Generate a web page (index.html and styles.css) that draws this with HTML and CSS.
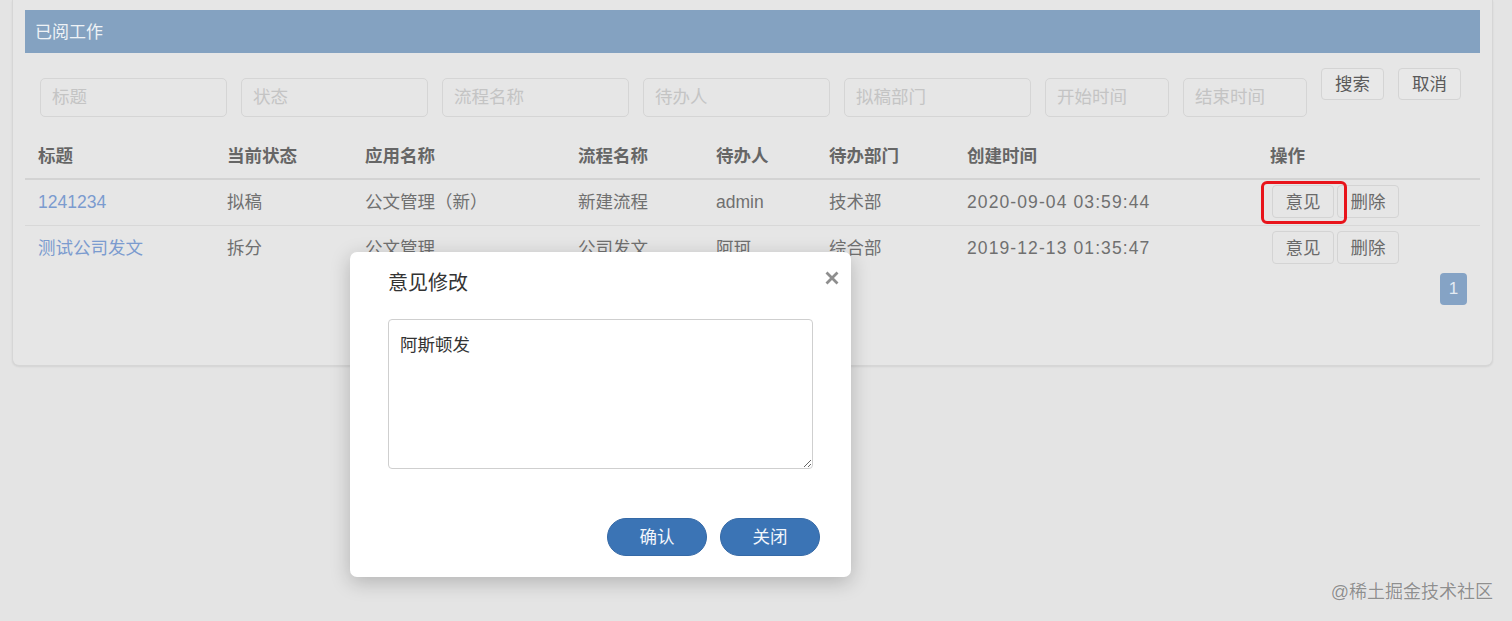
FILE: index.html
```html
<!DOCTYPE html>
<html lang="zh-CN">
<head>
<meta charset="utf-8">
<title>已阅工作</title>
<link rel="stylesheet" href="styles.css">
</head>
<body>
<div class="card">
  <div class="card-head">已阅工作</div>
  <div class="filters">
    <input class="f f-lg" placeholder="标题">
    <input class="f f-lg" placeholder="状态">
    <input class="f f-lg" placeholder="流程名称">
    <input class="f f-lg" placeholder="待办人">
    <input class="f f-lg" placeholder="拟稿部门">
    <input class="f f-sm" placeholder="开始时间">
    <input class="f f-sm" placeholder="结束时间">
    <button class="btn">搜索</button>
    <button class="btn">取消</button>
  </div>
  <table class="grid">
    <colgroup>
      <col class="c1"><col class="c2"><col class="c3"><col class="c4"><col class="c5"><col class="c6"><col class="c7"><col class="c8">
    </colgroup>
    <thead>
      <tr><th>标题</th><th>当前状态</th><th>应用名称</th><th>流程名称</th><th>待办人</th><th>待办部门</th><th>创建时间</th><th>操作</th></tr>
    </thead>
    <tbody>
      <tr>
        <td><a class="lnk">1241234</a></td><td>拟稿</td><td>公文管理（新）</td><td>新建流程</td><td>admin</td><td>技术部</td><td class="dt">2020-09-04 03:59:44</td>
        <td class="ops"><span class="mark-wrap"><button class="ob">意见</button><span class="mark"></span></span><button class="ob">删除</button></td>
      </tr>
      <tr>
        <td><a class="lnk">测试公司发文</a></td><td>拆分</td><td>公文管理</td><td>公司发文</td><td>阿珂</td><td>综合部</td><td class="dt">2019-12-13 01:35:47</td>
        <td class="ops"><button class="ob">意见</button><button class="ob">删除</button></td>
      </tr>
    </tbody>
  </table>
  <div class="pager"><span class="page">1</span></div>
</div>

<div class="modal">
  <div class="m-title">意见修改</div>
  <svg class="m-close" width="14" height="14" viewBox="0 0 14 14"><path d="M1.5 1.5 L12.5 12.5 M12.5 1.5 L1.5 12.5" stroke="#8e8e8e" stroke-width="2.8" stroke-linecap="butt"/></svg>
  <textarea class="m-text">阿斯顿发</textarea>
  <div class="m-foot">
    <button class="pill">确认</button>
    <button class="pill">关闭</button>
  </div>
</div>

<div class="watermark">@稀土掘金技术社区</div>
</body>
</html>
```

FILE: styles.css
```css
html, body {
  margin: 0;
  padding: 0;
}
body {
  background: #e4e4e4;
  font-family: "Liberation Sans", "Noto Sans CJK SC", sans-serif;
  font-size: 17.5px;
  line-height: 25px;
  color: #6b6b6b;
  width: 1512px;
  height: 621px;
  overflow: hidden;
  position: relative;
}
.card {
  margin-left: 12px;
  width: 1481px;
  box-sizing: border-box;
  background: #e6e6e6;
  border: 1px solid #d6d6d6;
  border-top: 0;
  border-radius: 0 0 7px 7px;
  box-shadow: 0 1px 2px rgba(0,0,0,0.08);
  padding: 10px 12px 60px;
}
.card-head {
  height: 43px;
  line-height: 45px;
  background: #84a2c1;
  color: #eef2f6;
  padding: 0 10px;
  font-size: 17px;
}
.filters {
  display: flex;
  align-items: flex-start;
  gap: 14px;
  margin-top: 15px;
  padding-left: 15px;
  height: 49px;
}
.f {
  box-sizing: border-box;
  height: 39px;
  margin-top: 10px;
  border: 1px solid #d5d5d5;
  border-radius: 5px;
  background: #e6e6e6;
  padding: 0 11px;
  font: inherit;
  font-size: 17.5px;
  color: #555;
  outline: none;
}
.f::placeholder { color: #c4c4c4; }
.f-lg { width: 187px; }
.f-sm { width: 124px; }
.btn {
  box-sizing: border-box;
  width: 63px;
  height: 32px;
  border: 1px solid #d4d4d4;
  border-radius: 4px;
  background: #e8e8e8;
  color: #5a5a5a;
  font: inherit;
  font-size: 17.5px;
  line-height: 28px;
  padding: 0;
}
.grid {
  margin-top: 17px;
  width: 1455px;
  table-layout: fixed;
  border-collapse: collapse;
}
.c1 { width: 189px; }
.c2 { width: 138px; }
.c3 { width: 213px; }
.c4 { width: 138px; }
.c5 { width: 113px; }
.c6 { width: 138px; }
.c7 { width: 303px; }
.c8 { width: 223px; }
.grid th {
  text-align: left;
  font-weight: bold;
  color: #666;
  padding: 10px 13px 9px;
  border-bottom: 2px solid #d3d3d3;
}
.grid td {
  padding: 10px 13px;
  border-top: 1px solid #d8d8d8;
  white-space: nowrap;
  color: #707070;
}
.grid td.dt { letter-spacing: 1.1px; }
.grid td.ops {
  padding: 4px 13px 6px 15px;
  vertical-align: middle;
}
.lnk { color: #7b9bcf; }
.ob {
  box-sizing: border-box;
  width: 62px;
  height: 33px;
  margin-right: 3px;
  border: 1px solid #d4d4d4;
  border-radius: 4px;
  background: #e6e6e6;
  color: #6a6a6a;
  font: inherit;
  font-size: 17.5px;
  line-height: 30px;
  padding: 0;
  vertical-align: middle;
}
.mark-wrap {
  position: relative;
  display: inline-block;
  vertical-align: middle;
}
.mark-wrap .ob { vertical-align: top; }
.mark {
  position: absolute;
  left: -11px;
  top: -4px;
  width: 86px;
  height: 43px;
  box-sizing: border-box;
  border: 3px solid #e8141b;
  border-radius: 6px;
}
.pager {
  display: flex;
  justify-content: flex-end;
  padding-right: 13px;
  margin-top: 2px;
}
.page {
  width: 27px;
  height: 32px;
  line-height: 32px;
  text-align: center;
  background: #85a3c5;
  color: #e4ebf3;
  border-radius: 4px;
  font-size: 17px;
}
.modal {
  position: absolute;
  left: 350px;
  top: 252px;
  width: 501px;
  height: 325px;
  box-sizing: border-box;
  background: #fff;
  border-radius: 7px;
  box-shadow: 0 5px 20px rgba(0,0,0,0.22);
  padding: 17px 31px 0 38px;
  display: flex;
  flex-direction: column;
}
.m-title {
  font-size: 20px;
  line-height: 28px;
  color: #333;
}
.m-close {
  position: absolute;
  top: 19px;
  right: 12px;
}
.m-text {
  margin-top: 22px;
  width: 425px;
  height: 150px;
  box-sizing: border-box;
  border: 1px solid #cfcfcf;
  border-radius: 4px;
  padding: 13px 11px;
  font: inherit;
  font-size: 17.5px;
  line-height: 25px;
  color: #333;
  outline: none;
}
.m-foot {
  display: flex;
  justify-content: flex-end;
  gap: 13px;
  margin-top: 49px;
}
.pill {
  width: 100px;
  height: 38px;
  border: 1px solid #3569a6;
  border-radius: 19px;
  background: #3b74b5;
  color: #f2f6fb;
  font: inherit;
  font-size: 17.5px;
  padding: 0;
}
.watermark {
  position: absolute;
  right: 19px;
  top: 579px;
  font-size: 18px;
  line-height: 26px;
  color: #8f8f8f;
  text-shadow: 0 0 1px #fff;
}
```
